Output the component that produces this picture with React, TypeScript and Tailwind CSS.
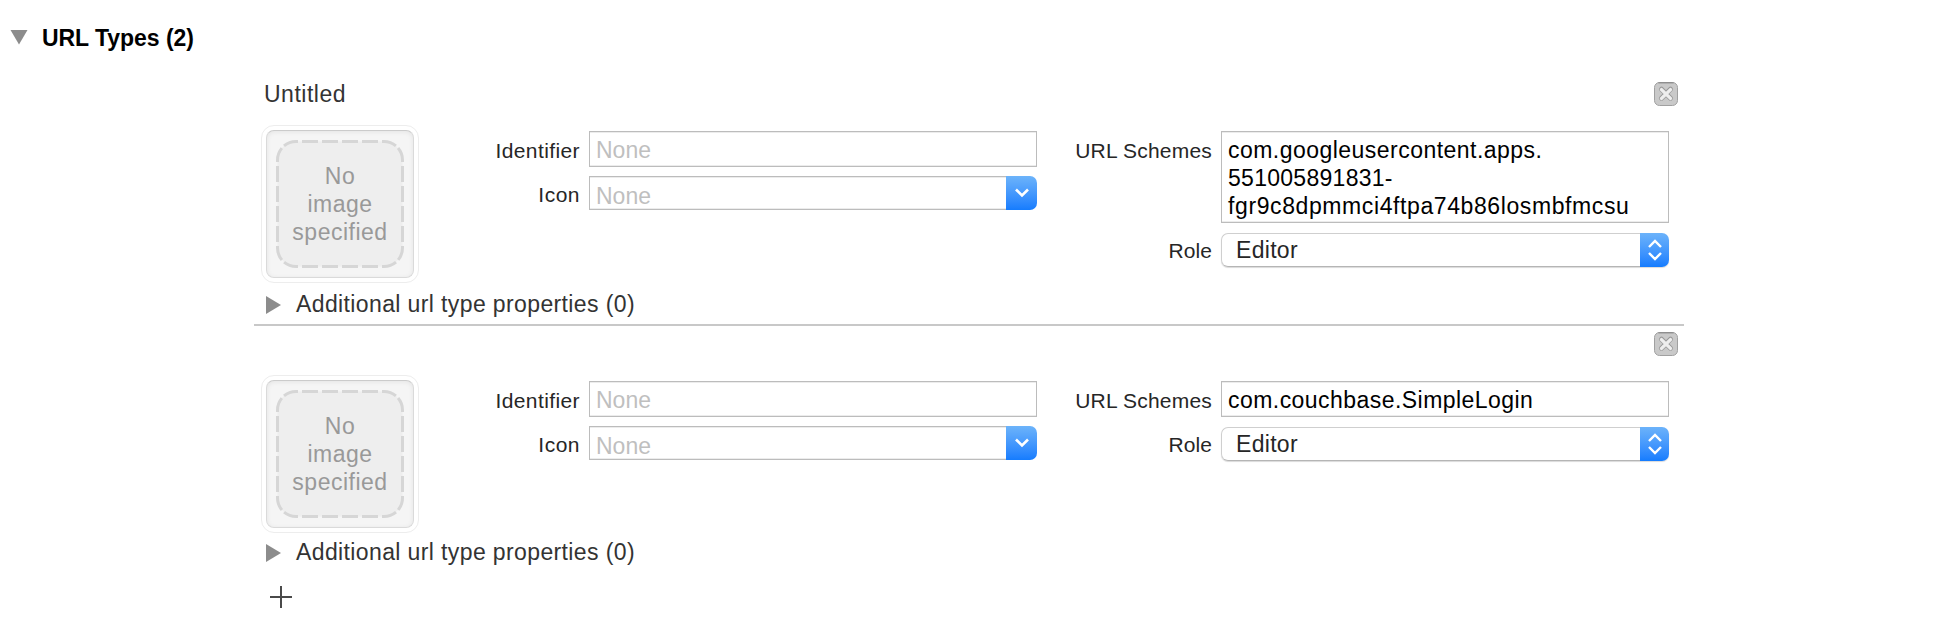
import React from "react";

const FONT = "font-['Liberation_Sans',Arial,sans-serif]";

const CORNER = "M22 1.5H20A18.5 18.5 0 0 0 1.5 20V22";

function ImageWell() {
  return (
    <div className="h-[158px] w-[158px] shrink-0 rounded-[13px] border border-[#ededed] bg-white p-1">
      <div className="h-[148px] w-[148px] rounded-[8px] border border-[#dadada] border-t-[#cbcbcb] bg-[#f5f5f5] shadow-[inset_0_1px_5px_rgba(0,0,0,0.07)]">
        <div className="grid h-[146px] w-[146px] place-items-center">
          <svg className="col-start-1 row-start-1" width="128" height="128" viewBox="0 0 128 128" fill="none">
            <rect x="1.5" y="1.5" width="125" height="125" rx="18.5" fill="#eeeeee" />
            <g stroke="#d6d6d6" strokeWidth="3">
              <path d="M26 1.5H102M26 126.5H102M1.5 26V102M126.5 26V102" strokeDasharray="16 4" />
              <g strokeDasharray="15 3 30">
                <path d={CORNER} />
                <path d={CORNER} transform="rotate(90 64 64)" />
                <path d={CORNER} transform="rotate(180 64 64)" />
                <path d={CORNER} transform="rotate(270 64 64)" />
              </g>
            </g>
          </svg>
          <div className="col-start-1 row-start-1 text-center text-[23px] leading-[28px] tracking-[0.5px] text-[#999999]">
            No
            <br />
            image
            <br />
            specified
          </div>
        </div>
      </div>
    </div>
  );
}

function DeleteButton() {
  return (
    <button className="block h-6 w-6" aria-label="Remove">
      <svg width="24" height="24" viewBox="0 0 24 24">
        <rect x="0.5" y="0.5" width="23" height="23" rx="5" fill="#c9c9c9" stroke="#a0a0a0" />
        <path d="M4.5 0.8H19.5" stroke="#8a8a8a" strokeWidth="1.2" />
        <path d="M7.5 7.2L16.5 16.2M16.5 7.2L7.5 16.2" stroke="#9a9a9a" strokeWidth="5" strokeLinecap="round" />
        <path d="M7.5 7.6L16.5 16.4M16.5 7.6L7.5 16.4" stroke="#eeeeee" strokeWidth="3.4" strokeLinecap="round" />
      </svg>
    </button>
  );
}

function Label({ children, className = "" }: { children: React.ReactNode; className?: string }) {
  return <div className={`shrink-0 text-right text-[21px] leading-[24px] text-[#262626] ${className}`}>{children}</div>;
}

const field = "border border-[#bcbcbc] shadow-[inset_0_1px_0_#ececec,inset_0_-1px_0_#ececec]";

function Popup() {
  return (
    <div className="flex h-[34px] w-[448px] rounded-[7px] shadow-[0_1px_1px_rgba(0,0,0,0.15)]">
      <div className="h-[34px] flex-1 rounded-l-[7px] border border-r-0 border-[#cfcfcf] border-b-[#b5b5b5] pl-[14px] text-[23px] leading-[32px] tracking-[0.3px] text-[#262626]">
        Editor
      </div>
      <div className="flex w-[29px] items-center justify-center rounded-r-[7px] bg-linear-to-b from-[#6cb3fa] to-[#147cfe]">
        <svg width="16" height="24" viewBox="0 0 16 24" fill="none" stroke="white" strokeWidth="2.4">
          <path d="M2 9L8 3L14 9M2 15L8 21L14 15" />
        </svg>
      </div>
    </div>
  );
}

type Scheme = { text: string; tracking: string };

function Entry({ title, schemes }: { title: string; schemes: Scheme[] }) {
  return (
    <section className="pt-[6px]">
      <div className="flex h-[43px] justify-between pl-[10px] pr-[6px]">
        <div className="text-[23px] leading-[24px] tracking-[0.5px] text-[#333333]">{title}</div>
        <DeleteButton />
      </div>
      <div className="flex h-[158px] pl-[7px]">
        <ImageWell />
        <div className="ml-[61px] pt-[6px]">
          <div className="flex h-[45px]">
            <Label className="w-[100px] pt-[8px] tracking-[0.4px]">Identifier</Label>
            <div className={`ml-[9px] h-[36px] w-[448px] pl-[6px] text-[23px] leading-[36px] text-[#bfbfbf] ${field}`}>None</div>
          </div>
          <div className="flex h-[34px]">
            <Label className="w-[100px] pt-[7px] tracking-[0.5px]">Icon</Label>
            <div className="ml-[9px] flex h-[34px] w-[448px]">
              <div className={`flex-1 border-r-0 pl-[6px] text-[23px] leading-[38px] text-[#bfbfbf] ${field}`}>None</div>
              <div className="flex w-[31px] items-center justify-center rounded-r-[7px] bg-linear-to-b from-[#6cb3fa] to-[#147cfe]">
                <svg width="16" height="12" viewBox="0 0 16 12" fill="none" stroke="white" strokeWidth="2.6">
                  <path d="M2 2.5L8 8.5L14 2.5" />
                </svg>
              </div>
            </div>
          </div>
        </div>
        <div className="ml-[34px] flex flex-col gap-[10px] pt-[6px]">
          <div className="flex">
            <Label className="w-[141px] pt-[8px] tracking-[0.2px]">URL Schemes</Label>
            <div className={`ml-[9px] w-[448px] pb-[2px] pl-[6px] pt-[4px] text-[23px] leading-[28px] text-black ${field} ${schemes.length > 1 ? "h-[92px]" : "h-[36px]"}`}>
              {schemes.map((s) => (
                <div key={s.text} className={s.tracking}>
                  {s.text}
                </div>
              ))}
            </div>
          </div>
          <div className="flex">
            <Label className="w-[141px] pt-[6px] tracking-[0.1px]">Role</Label>
            <div className="ml-[9px]">
              <Popup />
            </div>
          </div>
        </div>
      </div>
    </section>
  );
}

function Additional() {
  return (
    <div className="flex h-[28px] items-center pl-[12px]">
      <svg width="15" height="18" viewBox="0 0 15 18">
        <path d="M0 0L15 9L0 18Z" fill="#8c8c8c" />
      </svg>
      <div className="ml-[15px] pb-[2px] text-[23px] leading-[28px] tracking-[0.38px] text-[#333333]">Additional url type properties (0)</div>
    </div>
  );
}

export default function App() {
  return (
    <div className={`h-[626px] w-[1938px] overflow-hidden bg-white ${FONT}`}>
      <header className="flex h-[76px] pl-[10px] pt-[24px]">
        <svg className="mt-[6px]" width="18" height="15" viewBox="0 0 18 15">
          <path d="M0.5 0H17.5L9 14.5Z" fill="#8c8c8c" />
        </svg>
        <h1 className="ml-[14px] text-[23px] font-bold leading-[28px] tracking-[-0.05px] text-black">URL Types (2)</h1>
      </header>
      <main className="ml-[254px] w-[1430px]">
        <Entry
          title="Untitled"
          schemes={[
            { text: "com.googleusercontent.apps.", tracking: "tracking-[0.47px]" },
            { text: "551005891831-", tracking: "tracking-[0.28px]" },
            { text: "fgr9c8dpmmci4ftpa74b86losmbfmcsu", tracking: "tracking-[0.6px]" },
          ]}
        />
        <div className="pt-[8px]">
          <Additional />
        </div>
        <div className="mt-[5px] h-[2px] bg-[#c8c8c8]" />
        <Entry title="" schemes={[{ text: "com.couchbase.SimpleLogin", tracking: "tracking-[0.45px]" }]} />
        <div className="pt-[6px]">
          <Additional />
        </div>
        <svg className="ml-[16px] mt-[19px]" width="22" height="22" viewBox="0 0 22 22">
          <path d="M11 0V22M0 11H22" stroke="#4a4a4a" strokeWidth="2" />
        </svg>
      </main>
    </div>
  );
}
